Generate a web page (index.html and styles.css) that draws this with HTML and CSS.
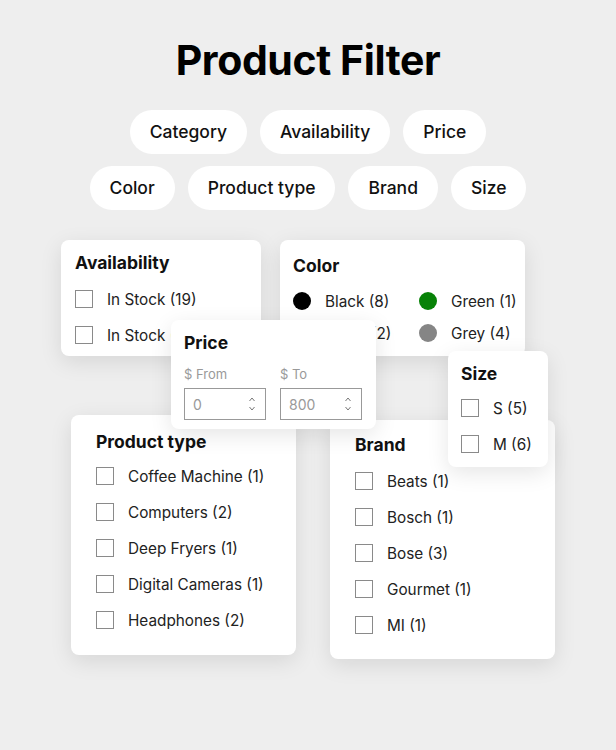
FILE: index.html
```html
<!DOCTYPE html>
<html>
    <head>
        <meta charset="UTF-8">
        <title>Product Filter</title>
        <link rel="stylesheet" href="styles.css">
    </head>
    <body>
        <div id="page">
            <h1>Product Filter</h1>
            <div class="pills">
                <div class="pill-row">
                    <span class="pill">Category</span>
                    <span class="pill">Availability</span>
                    <span class="pill">Price</span>
                </div>
                <div class="pill-row">
                    <span class="pill">Color</span>
                    <span class="pill">Product type</span>
                    <span class="pill">Brand</span>
                    <span class="pill">Size</span>
                </div>
            </div>

            <div id="board">
                <div class="card" id="availability">
                    <h3>Availability</h3>
                    <div class="opt"><span class="box"></span>In Stock (19)</div>
                    <div class="opt"><span class="box"></span>In Stock (0)</div>
                </div>

                <div class="card" id="color">
                    <h3>Color</h3>
                    <div class="swatches">
                        <div class="opt"><span class="dot black"></span>Black (8)</div>
                        <div class="opt"><span class="dot green"></span>Green (1)</div>
                        <div class="opt"><span class="dot white"></span>White (2)</div>
                        <div class="opt"><span class="dot grey"></span>Grey (4)</div>
                    </div>
                </div>

                <div class="card" id="ptype">
                    <h3>Product type</h3>
                    <div class="opt"><span class="box"></span>Coffee Machine (1)</div>
                    <div class="opt"><span class="box"></span>Computers (2)</div>
                    <div class="opt"><span class="box"></span>Deep Fryers (1)</div>
                    <div class="opt"><span class="box"></span>Digital Cameras (1)</div>
                    <div class="opt"><span class="box"></span>Headphones (2)</div>
                </div>

                <div class="card" id="brand">
                    <h3>Brand</h3>
                    <div class="opt"><span class="box"></span>Beats (1)</div>
                    <div class="opt"><span class="box"></span>Bosch (1)</div>
                    <div class="opt"><span class="box"></span>Bose (3)</div>
                    <div class="opt"><span class="box"></span>Gourmet (1)</div>
                    <div class="opt"><span class="box"></span>MI (1)</div>
                </div>

                <div class="card" id="price">
                    <h3>Price</h3>
                    <div class="range">
                        <div class="field">
                            <label>$ From</label>
                            <div class="num">
                                <span>0</span>
                                <svg class="spin" width="8" height="16" viewBox="0 0 8 16"><polyline points="1.5,5 4,2 6.5,5" /><polyline points="1.5,11 4,14 6.5,11" /></svg>
                            </div>
                        </div>
                        <div class="field">
                            <label>$ To</label>
                            <div class="num">
                                <span>800</span>
                                <svg class="spin" width="8" height="16" viewBox="0 0 8 16"><polyline points="1.5,5 4,2 6.5,5" /><polyline points="1.5,11 4,14 6.5,11" /></svg>
                            </div>
                        </div>
                    </div>
                </div>

                <div class="card" id="size">
                    <h3>Size</h3>
                    <div class="opt"><span class="box"></span>S (5)</div>
                    <div class="opt"><span class="box"></span>M (6)</div>
                </div>
            </div>
        </div>
    </body>
</html>
```

FILE: styles.css
```css
body {
    margin: 0;
    background-color: #eeeeee;
    font-family: "Inter", "Noto Sans", sans-serif;
    color: #1a1a1a;
}
#page {
    width: 616px;
    height: 750px;
    overflow: hidden;
}
h1 {
    margin: 0;
    padding-top: 37px;
    text-align: center;
    font-size: 41px;
    font-weight: 700;
    letter-spacing: -0.4px;
    color: #000;
    line-height: 46px;
}
.pills {
    margin-top: 27px;
    display: flex;
    flex-direction: column;
    gap: 12px;
    align-items: center;
}
.pill-row {
    display: flex;
    gap: 13px;
}
.pill {
    background-color: #fff;
    border-radius: 22px;
    height: 44px;
    line-height: 44px;
    padding: 0 20px;
    font-size: 17.5px;
    font-weight: 500;
    color: #111;
}

/* free canvas of filter cards */
#board {
    position: relative;
    height: 540px;
}
.card {
    position: absolute;
    background-color: #fff;
    border-radius: 8px;
    box-shadow: 0 6px 22px rgba(0, 0, 0, 0.10);
    box-sizing: border-box;
}
.card h3 {
    margin: 0 0 8px 0;
    font-size: 17.5px;
    font-weight: 700;
    color: #111;
}
.opt {
    display: flex;
    align-items: center;
    height: 36px;
    font-size: 15.3px;
    color: #222;
    white-space: nowrap;
}
.box {
    width: 18px;
    height: 18px;
    border: 1px solid #8a8a8a;
    box-sizing: border-box;
    margin-right: 14px;
    flex-shrink: 0;
}
.dot {
    width: 18px;
    height: 18px;
    border-radius: 50%;
    margin-right: 14px;
    flex-shrink: 0;
}
.black { background-color: #000; }
.green { background-color: #078207; }
.grey { background-color: #858585; }
.white { background-color: #fff; border: 1px solid #ddd; box-sizing: border-box; }

#availability {
    left: 61px; top: 30px; width: 200px; height: 116px;
    padding: 12px 14px;
    z-index: 1;
}
#color {
    left: 280px; top: 30px; width: 245px; height: 116px;
    padding: 15px 13px;
    z-index: 1;
}
#color h3 { margin-bottom: 9px; }
.swatches {
    display: grid;
    grid-template-columns: 126px auto;
}
.swatches .opt { height: 32px; }
#ptype {
    left: 71px; top: 205px; width: 225px; height: 240px;
    padding: 16px 25px;
    z-index: 1;
}
#ptype h3 { margin-bottom: 6px; }
#brand {
    left: 330px; top: 210px; width: 225px; height: 239px;
    padding: 14px 25px;
    z-index: 1;
}
#price {
    left: 171px; top: 110px; width: 205px; height: 109px;
    padding: 12px 13px;
    z-index: 2;
}
#price h3 { margin-bottom: 13px; }
.range {
    display: flex;
    gap: 14px;
}
.field label {
    display: block;
    font-size: 13px;
    color: #999;
    margin-bottom: 6px;
}
.num {
    width: 82px;
    height: 32px;
    border: 1px solid #999;
    box-sizing: border-box;
    display: flex;
    align-items: center;
    justify-content: space-between;
    padding: 0 9px 0 8px;
    font-size: 14px;
    color: #999;
}
.spin {
    fill: none;
    stroke: #777;
    stroke-width: 1;
}
#size {
    left: 448px; top: 141px; width: 100px; height: 116px;
    padding: 12px 13px;
    z-index: 2;
}
#size h3 { margin-bottom: 6px; }
```
